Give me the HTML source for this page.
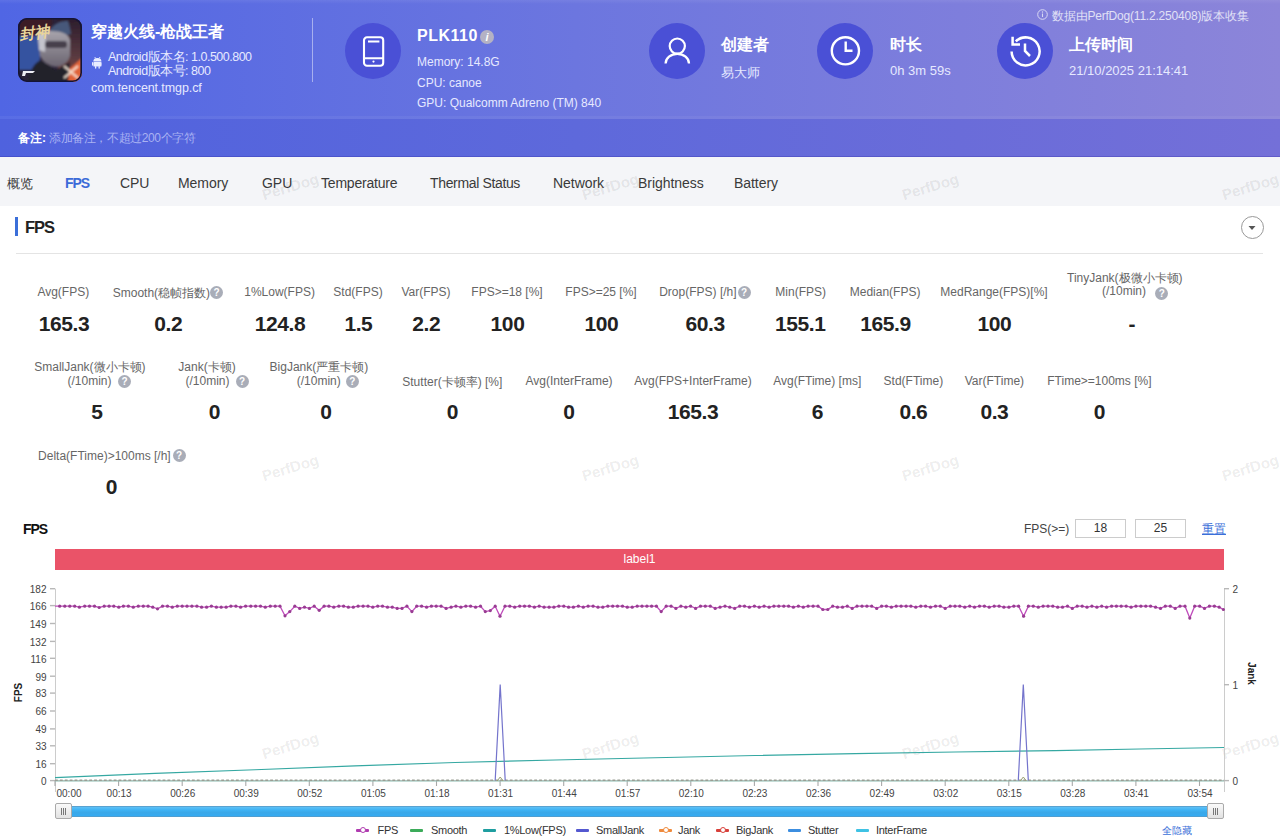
<!DOCTYPE html>
<html><head><meta charset="utf-8">
<style>
*{margin:0;padding:0;box-sizing:border-box}
html,body{width:1280px;height:839px;overflow:hidden;background:#fff;font-family:"Liberation Sans",sans-serif}
.abs{position:absolute;white-space:nowrap}
#hdr{position:absolute;left:0;top:0;width:1280px;height:119px;background:linear-gradient(180deg,rgba(255,255,255,0.07) 0,rgba(255,255,255,0) 4px),linear-gradient(90deg,#5066e4 0%,#6c76df 45%,#7e7edc 75%,#8c85d9 100%)}
#rmk{position:absolute;left:0;top:119px;width:1280px;height:38px;box-shadow:inset 0 -1px 0 rgba(40,30,150,0.25);background:linear-gradient(90deg,#4f62de 0%,#5e69db 45%,#6a6cd9 75%,#7470d8 100%)}
.circ{position:absolute;width:56px;height:56px;border-radius:50%;background:#4a50d6}
.wt{color:#fff}
.ttl{font-size:17px;font-weight:bold;color:#fff}
.sub{font-size:12px;color:#e6e9ff}
#tabs{position:absolute;left:0;top:157px;width:1280px;height:49px;background:#f4f5f8}
.tab{position:absolute;top:175px;font-size:14px;letter-spacing:-0.05px;color:#3a3a3a;white-space:nowrap}
.lbl{position:absolute;font-size:12px;color:#666;white-space:nowrap;text-align:center}
.val{position:absolute;font-size:21px;letter-spacing:-0.4px;font-weight:bold;color:#222;white-space:nowrap;text-align:center}
.q{display:inline-block;width:13px;height:13px;border-radius:50%;background:#a9a9a9;color:#fff;font-size:10px;font-weight:bold;line-height:13px;text-align:center;vertical-align:-2px;margin-left:2px}
.wm{position:absolute;font-size:15px;font-weight:bold;color:rgba(0,0,0,0.085);transform:rotate(-17deg);white-space:nowrap}
.ax{position:absolute;font-size:11px;color:#555;white-space:nowrap}
.leg{position:absolute;top:823.5px;font-size:11px;letter-spacing:-0.3px;color:#333;white-space:nowrap}
.li{position:absolute;top:828.5px;width:13px;height:3.5px;border-radius:1px}
</style><style>
.qi{position:absolute;width:13px;height:13px;border-radius:50%;background:#a9adb8;color:#fff;font:bold 10px/13px "Liberation Sans",sans-serif;text-align:center}
.inp{position:absolute;top:519px;width:51px;height:19px;border:1px solid #ccc;font-size:12px;color:#333;text-align:center;line-height:17px;background:#fff}
.tk{font-family:"Liberation Sans",sans-serif;font-size:10px;fill:#444}
.hdl{position:absolute;top:803px;width:17px;height:16px;background:linear-gradient(#fafafa,#e2e2e2);border:1px solid #aaa;border-radius:2px}
.hdl i{position:absolute;top:4px;width:1px;height:7px;background:#777}
.hdl i:nth-child(1){left:5px}.hdl i:nth-child(2){left:7px}.hdl i:nth-child(3){left:9px}
</style></head><body>
<div id="hdr"></div>
<div id="rmk"></div>
<div class="abs" style="left:0;top:116px;width:1280px;height:3px;background:rgba(255,255,255,0.05)"></div>

<!-- game icon -->
<svg class="abs" style="left:18px;top:18px" width="64" height="64" viewBox="0 0 64 64">
<defs><clipPath id="gc"><rect width="64" height="64" rx="9"/></clipPath>
<filter id="bl"><feGaussianBlur stdDeviation="1.3"/></filter>
<linearGradient id="bgr" x1="0" y1="0" x2="0" y2="1"><stop offset="0" stop-color="#2a1c2c"/><stop offset=".6" stop-color="#5a3a40"/><stop offset="1" stop-color="#8a4a3a"/></linearGradient>
<linearGradient id="sk" x1="0" y1="0" x2="0" y2="1"><stop offset="0" stop-color="#a8a4ac"/><stop offset="1" stop-color="#6a6470"/></linearGradient>
</defs>
<g clip-path="url(#gc)">
<rect width="64" height="64" fill="#2a2238"/>
<g filter="url(#bl)">
<rect x="40" y="0" width="24" height="64" fill="url(#bgr)"/>
<rect x="0" y="18" width="22" height="34" fill="#3552a0"/>
<rect x="0" y="0" width="34" height="18" fill="#3a1c28"/>
<path d="M36 64 L64 40 L64 64 Z" fill="#e06438"/>
<path d="M30 14 Q38 2 50 3 Q52 9 53 16 L44 18 L30 17 Z" fill="#46587a"/>
<path d="M20 18 Q22 12 32 13 Q50 13 52 22 L52 38 Q50 47 38 49 Q26 47 22 38 Z" fill="url(#sk)"/>
<path d="M20 17 Q23 13 28 14 L27 34 L21 32 Z" fill="#c4c4cc"/>
<rect x="27" y="23" width="22" height="7" rx="3" fill="#3a3440" opacity=".85"/>
<path d="M10 64 Q12 48 22 42 L38 52 L52 44 L50 64 Z" fill="#22222a"/>
<path d="M46 48 L60 60 M60 48 L46 60" stroke="#f8e8d8" stroke-width="2.2" opacity=".9"/>
</g>
<text x="1" y="20" font-size="15" font-weight="bold" font-style="italic" fill="#e8d49a" font-family="Liberation Serif,serif" transform="rotate(-8 16 12)">封神</text>
<path d="M5 53 h12 l-2 2 h-7 l-1 3 h-3z" fill="#eeeef4"/>
<rect x="0.8" y="0.8" width="62.4" height="62.4" rx="8.5" fill="none" stroke="#141436" stroke-width="1.6"/>
</g></svg>
<div class="abs ttl" style="left:91px;top:22px;font-size:16px">穿越火线-枪战王者</div>
<svg class="abs" style="left:91.5px;top:56.3px" width="10.8" height="12.8" viewBox="0 0 12 14"><path d="M3 1l1.2 1.6M9 1L7.8 2.6" stroke="#e8ecff" stroke-width="1"/><path d="M1.5 6a4.5 3.8 0 0 1 9 0z" fill="#e8ecff"/><rect x="1.5" y="6.6" width="9" height="5" rx="1" fill="#e8ecff"/><rect x="0" y="6.6" width="1.2" height="4" rx=".6" fill="#e8ecff"/><rect x="10.8" y="6.6" width="1.2" height="4" rx=".6" fill="#e8ecff"/><rect x="3.3" y="11" width="1.5" height="3" rx=".7" fill="#e8ecff"/><rect x="7.2" y="11" width="1.5" height="3" rx=".7" fill="#e8ecff"/></svg>
<div class="abs sub" style="left:108px;top:49.5px;font-size:12.5px;line-height:14px;letter-spacing:-0.5px">Android版本名: 1.0.500.800<br>Android版本号: 800</div>
<div class="abs sub" style="left:91px;top:81px;font-size:12.5px;letter-spacing:-0.1px">com.tencent.tmgp.cf</div>
<div class="abs" style="left:312px;top:18px;width:1px;height:64px;background:rgba(255,255,255,0.45)"></div>

<!-- device -->
<div class="circ" style="left:345px;top:23px"></div>
<svg class="abs" style="left:361px;top:35px" width="25" height="32" viewBox="0 0 25 32"><rect x="3" y="2.3" width="19.2" height="28.4" rx="3" fill="none" stroke="#fff" stroke-width="2.1"/><path d="M7 6.4h11.4M3 23.3h19.2" stroke="#fff" stroke-width="2"/><circle cx="12.5" cy="26.6" r="1.1" fill="#fff"/></svg>
<div class="abs ttl" style="left:417px;top:27px;font-size:16px;letter-spacing:0.5px">PLK110</div>
<div class="abs" style="left:480px;top:29.5px;width:14px;height:14px;border-radius:50%;background:#b4b2c4;color:#fff;font-size:11px;font-weight:bold;font-style:italic;text-align:center;line-height:14px">i</div>
<div class="abs sub" style="left:417px;top:55px">Memory: 14.8G</div>
<div class="abs sub" style="left:417px;top:76px">CPU: canoe</div>
<div class="abs sub" style="left:417px;top:96px">GPU: Qualcomm Adreno (TM) 840</div>

<!-- creator -->
<div class="circ" style="left:649px;top:23px"></div>
<svg class="abs" style="left:661px;top:35px" width="32" height="32" viewBox="0 0 32 32"><circle cx="16.3" cy="11.1" r="7.6" fill="none" stroke="#fff" stroke-width="2.2"/><path d="M4.6 28.6A11.7 9.8 0 0 1 28 28.6" fill="none" stroke="#fff" stroke-width="2.3"/></svg>
<div class="abs ttl" style="left:721px;top:35px;font-size:16px">创建者</div>
<div class="abs sub" style="left:721px;top:65px;font-size:12.5px">易大师</div>

<!-- duration -->
<div class="circ" style="left:817px;top:23px"></div>
<svg class="abs" style="left:829px;top:35px" width="32" height="32" viewBox="0 0 32 32"><circle cx="16.4" cy="15.8" r="13.6" fill="none" stroke="#fff" stroke-width="2.4"/><path d="M16.7 6.4v9.4h6.8" fill="none" stroke="#fff" stroke-width="2.4"/></svg>
<div class="abs ttl" style="left:890px;top:35px;font-size:16px">时长</div>
<div class="abs sub" style="left:890px;top:63px;font-size:13px">0h 3m 59s</div>

<!-- upload -->
<div class="circ" style="left:997px;top:23px"></div>
<svg class="abs" style="left:1009px;top:35px" width="32" height="32" viewBox="0 0 32 32"><path d="M2.6 16.5A14 14 0 1 0 6.8 6.4" fill="none" stroke="#fff" stroke-width="2.5"/><path d="M3.6 1.8v7.6h7.4" fill="none" stroke="#fff" stroke-width="2.5"/><path d="M16 8.6v7.4l5 5" fill="none" stroke="#fff" stroke-width="2.5"/></svg>
<div class="abs ttl" style="left:1069px;top:35px;font-size:16px">上传时间</div>
<div class="abs sub" style="left:1069px;top:63px;font-size:13px">21/10/2025 21:14:41</div>
<svg class="abs" style="left:1037px;top:9px" width="11" height="11" viewBox="0 0 11 11"><circle cx="5.5" cy="5.5" r="4.8" fill="none" stroke="#d8d8f4" stroke-width="1"/><path d="M5.5 4.5v3.5" stroke="#d8d8f4" stroke-width="1.1"/><circle cx="5.5" cy="3" r=".7" fill="#d8d8f4"/></svg>
<div class="abs" style="left:1052px;top:8px;font-size:12px;letter-spacing:-0.2px;color:#e0e0f6">数据由PerfDog(11.2.250408)版本收集</div>

<!-- remark -->
<div class="abs" style="left:18px;top:130px;font-size:12px;font-weight:bold;color:#fff">备注:</div>
<div class="abs" style="left:49px;top:130px;font-size:12px;letter-spacing:-0.4px;color:#a9b2f2">添加备注，不超过200个字符</div>

<!-- tabs -->
<div id="tabs"></div>
<div class="tab" style="left:7px;font-size:12.5px;top:176px">概览</div>
<div class="tab" style="left:65px;color:#3b6ad8;font-weight:bold;letter-spacing:-1.1px">FPS</div>
<div class="tab" style="left:120px">CPU</div>
<div class="tab" style="left:178px">Memory</div>
<div class="tab" style="left:262px">GPU</div>
<div class="tab" style="left:321px;letter-spacing:-0.2px">Temperature</div>
<div class="tab" style="left:430px;letter-spacing:-0.35px">Thermal Status</div>
<div class="tab" style="left:553px">Network</div>
<div class="tab" style="left:638px">Brightness</div>
<div class="tab" style="left:734px">Battery</div>

<!-- section title -->
<div class="abs" style="left:15px;top:217px;width:3px;height:19px;background:#3b6fd9"></div>
<div class="abs" style="left:25px;top:218px;font-size:16.5px;font-weight:bold;letter-spacing:-1px;color:#222">FPS</div>
<div class="abs" style="left:16px;top:253px;width:1247px;height:1px;background:#e4e4e4"></div>
<div class="abs" style="left:1241px;top:216px;width:23px;height:23px;border-radius:50%;border:1px solid #999"></div>
<svg class="abs" style="left:1248px;top:225px" width="8" height="6" viewBox="0 0 8 6"><path d="M0.5 1h7L4 5z" fill="#555"/></svg>

<div class="lbl" style="left:-46.7px;top:285px;width:220px">Avg(FPS)</div>
<div class="lbl" style="left:51.4px;top:285px;width:220px">Smooth(稳帧指数)</div>
<div class="qi" style="left:210.0px;top:286.4px">?</div>
<div class="lbl" style="left:169.6px;top:285px;width:220px">1%Low(FPS)</div>
<div class="lbl" style="left:248.0px;top:285px;width:220px">Std(FPS)</div>
<div class="lbl" style="left:316.0px;top:285px;width:220px">Var(FPS)</div>
<div class="lbl" style="left:397.0px;top:285px;width:220px">FPS&gt;=18 [%]</div>
<div class="lbl" style="left:491.0px;top:285px;width:220px">FPS&gt;=25 [%]</div>
<div class="lbl" style="left:587.9px;top:285px;width:220px">Drop(FPS) [/h]</div>
<div class="qi" style="left:737.5px;top:286.3px">?</div>
<div class="lbl" style="left:690.7px;top:285px;width:220px">Min(FPS)</div>
<div class="lbl" style="left:775.1px;top:285px;width:220px">Median(FPS)</div>
<div class="lbl" style="left:884.0px;top:285px;width:220px">MedRange(FPS)[%]</div>
<div class="val" style="left:-46.0px;top:312px;width:220px">165.3</div>
<div class="val" style="left:58.2px;top:312px;width:220px">0.2</div>
<div class="val" style="left:170.0px;top:312px;width:220px">124.8</div>
<div class="val" style="left:248.4px;top:312px;width:220px">1.5</div>
<div class="val" style="left:316.2px;top:312px;width:220px">2.2</div>
<div class="val" style="left:397.5px;top:312px;width:220px">100</div>
<div class="val" style="left:491.3px;top:312px;width:220px">100</div>
<div class="val" style="left:595.1px;top:312px;width:220px">60.3</div>
<div class="val" style="left:690.3px;top:312px;width:220px">155.1</div>
<div class="val" style="left:775.5px;top:312px;width:220px">165.9</div>
<div class="val" style="left:884.4px;top:312px;width:220px">100</div>
<div class="lbl" style="left:1014.8px;top:270px;width:220px">TinyJank(极微小卡顿)</div>
<div class="lbl" style="left:1014.0px;top:284px;width:220px">(/10min)</div>
<div class="qi" style="left:1155.3px;top:286.5px">?</div>
<div class="val" style="left:1021.8px;top:312px;width:220px">-</div>
<div class="lbl" style="left:-20.1px;top:359px;width:220px">SmallJank(微小卡顿)</div>
<div class="lbl" style="left:-20.5px;top:373.5px;width:220px">(/10min)</div>
<div class="qi" style="left:118.0px;top:374.5px">?</div>
<div class="val" style="left:-13.0px;top:400px;width:220px">5</div>
<div class="lbl" style="left:97.0px;top:359px;width:220px">Jank(卡顿)</div>
<div class="lbl" style="left:97.5px;top:373.5px;width:220px">(/10min)</div>
<div class="qi" style="left:235.6px;top:374.5px">?</div>
<div class="val" style="left:104.5px;top:400px;width:220px">0</div>
<div class="lbl" style="left:208.9px;top:359px;width:220px">BigJank(严重卡顿)</div>
<div class="lbl" style="left:208.8px;top:373.5px;width:220px">(/10min)</div>
<div class="qi" style="left:345.8px;top:374.5px">?</div>
<div class="val" style="left:216.0px;top:400px;width:220px">0</div>
<div class="lbl" style="left:342.3px;top:373.5px;width:220px">Stutter(卡顿率) [%]</div>
<div class="val" style="left:342.3px;top:400px;width:220px">0</div>
<div class="lbl" style="left:459.0px;top:373.5px;width:220px">Avg(InterFrame)</div>
<div class="val" style="left:459.0px;top:400px;width:220px">0</div>
<div class="lbl" style="left:583.0px;top:373.5px;width:220px">Avg(FPS+InterFrame)</div>
<div class="val" style="left:583.0px;top:400px;width:220px">165.3</div>
<div class="lbl" style="left:707.3px;top:373.5px;width:220px">Avg(FTime) [ms]</div>
<div class="val" style="left:707.3px;top:400px;width:220px">6</div>
<div class="lbl" style="left:803.4px;top:373.5px;width:220px">Std(FTime)</div>
<div class="val" style="left:803.4px;top:400px;width:220px">0.6</div>
<div class="lbl" style="left:884.4px;top:373.5px;width:220px">Var(FTime)</div>
<div class="val" style="left:884.4px;top:400px;width:220px">0.3</div>
<div class="lbl" style="left:989.4px;top:373.5px;width:220px">FTime&gt;=100ms [%]</div>
<div class="val" style="left:989.4px;top:400px;width:220px">0</div>
<div class="lbl" style="left:-5.6px;top:448.5px;width:220px">Delta(FTime)&gt;100ms [/h]</div>
<div class="qi" style="left:172.5px;top:449.0px">?</div>
<div class="val" style="left:1.5px;top:475px;width:220px">0</div>
<div class="wm" style="left:261px;top:178px">PerfDog</div>
<div class="wm" style="left:581px;top:178px">PerfDog</div>
<div class="wm" style="left:901px;top:178px">PerfDog</div>
<div class="wm" style="left:1221px;top:178px">PerfDog</div>
<div class="wm" style="left:261px;top:459px">PerfDog</div>
<div class="wm" style="left:581px;top:459px">PerfDog</div>
<div class="wm" style="left:901px;top:459px">PerfDog</div>
<div class="wm" style="left:1221px;top:459px">PerfDog</div>
<div class="wm" style="left:261px;top:737px">PerfDog</div>
<div class="wm" style="left:581px;top:737px">PerfDog</div>
<div class="wm" style="left:901px;top:737px">PerfDog</div>
<div class="wm" style="left:1221px;top:737px">PerfDog</div>
<div class="abs" style="left:23px;top:521px;font-size:14px;font-weight:bold;letter-spacing:-1.1px;color:#111">FPS</div>
<div class="abs" style="left:1024px;top:522px;font-size:12px;color:#444">FPS(&gt;=)</div>
<div class="inp" style="left:1075px">18</div>
<div class="inp" style="left:1135px">25</div>
<div class="abs" style="left:1202px;top:521px;font-size:12px;color:#3b6fd9;text-decoration:underline">重置</div>
<div class="abs" style="left:55px;top:549px;width:1169px;height:21px;background:#ea5368;color:#fff;font-size:12px;text-align:center;line-height:21px">label1</div>
<svg class="abs" style="left:0;top:0" width="1280" height="839"><line x1="55.5" y1="588.7" x2="55.5" y2="792" stroke="#ccc" stroke-width="1"/><line x1="1224.5" y1="588.7" x2="1224.5" y2="792" stroke="#ccc" stroke-width="1"/><line x1="55" y1="780.5" x2="1224" y2="780.5" stroke="#ccc" stroke-width="1"/><line x1="50" y1="780.6" x2="55" y2="780.6" stroke="#b8b8b8" stroke-width="1.4"/><text x="46.5" y="784.9" text-anchor="end" class="tk">0</text><line x1="50" y1="763.7" x2="55" y2="763.7" stroke="#b8b8b8" stroke-width="1.4"/><text x="46.5" y="768.0" text-anchor="end" class="tk">16</text><line x1="50" y1="745.8" x2="55" y2="745.8" stroke="#b8b8b8" stroke-width="1.4"/><text x="46.5" y="750.1" text-anchor="end" class="tk">33</text><line x1="50" y1="728.9" x2="55" y2="728.9" stroke="#b8b8b8" stroke-width="1.4"/><text x="46.5" y="733.2" text-anchor="end" class="tk">49</text><line x1="50" y1="711.0" x2="55" y2="711.0" stroke="#b8b8b8" stroke-width="1.4"/><text x="46.5" y="715.3" text-anchor="end" class="tk">66</text><line x1="50" y1="693.1" x2="55" y2="693.1" stroke="#b8b8b8" stroke-width="1.4"/><text x="46.5" y="697.4" text-anchor="end" class="tk">83</text><line x1="50" y1="676.2" x2="55" y2="676.2" stroke="#b8b8b8" stroke-width="1.4"/><text x="46.5" y="680.5" text-anchor="end" class="tk">99</text><line x1="50" y1="658.3" x2="55" y2="658.3" stroke="#b8b8b8" stroke-width="1.4"/><text x="46.5" y="662.6" text-anchor="end" class="tk">116</text><line x1="50" y1="641.4" x2="55" y2="641.4" stroke="#b8b8b8" stroke-width="1.4"/><text x="46.5" y="645.7" text-anchor="end" class="tk">132</text><line x1="50" y1="623.5" x2="55" y2="623.5" stroke="#b8b8b8" stroke-width="1.4"/><text x="46.5" y="627.8" text-anchor="end" class="tk">149</text><line x1="50" y1="605.6" x2="55" y2="605.6" stroke="#b8b8b8" stroke-width="1.4"/><text x="46.5" y="609.9" text-anchor="end" class="tk">166</text><line x1="50" y1="588.7" x2="55" y2="588.7" stroke="#b8b8b8" stroke-width="1.4"/><text x="46.5" y="593.0" text-anchor="end" class="tk">182</text><line x1="1224" y1="780.6" x2="1229" y2="780.6" stroke="#b8b8b8" stroke-width="1.4"/><text x="1232.5" y="784.9" class="tk">0</text><line x1="1224" y1="684.7" x2="1229" y2="684.7" stroke="#b8b8b8" stroke-width="1.4"/><text x="1232.5" y="689.0" class="tk">1</text><line x1="1224" y1="588.7" x2="1229" y2="588.7" stroke="#b8b8b8" stroke-width="1.4"/><text x="1232.5" y="593.0" class="tk">2</text><line x1="55.0" y1="780.6" x2="55.0" y2="786" stroke="#a8a8a8" stroke-width="1.1"/><text x="69.0" y="797.4" text-anchor="middle" class="tk">00:00</text><line x1="118.6" y1="780.6" x2="118.6" y2="786" stroke="#a8a8a8" stroke-width="1.1"/><text x="119.1" y="797.4" text-anchor="middle" class="tk">00:13</text><line x1="182.2" y1="780.6" x2="182.2" y2="786" stroke="#a8a8a8" stroke-width="1.1"/><text x="182.7" y="797.4" text-anchor="middle" class="tk">00:26</text><line x1="245.8" y1="780.6" x2="245.8" y2="786" stroke="#a8a8a8" stroke-width="1.1"/><text x="246.2" y="797.4" text-anchor="middle" class="tk">00:39</text><line x1="309.3" y1="780.6" x2="309.3" y2="786" stroke="#a8a8a8" stroke-width="1.1"/><text x="309.8" y="797.4" text-anchor="middle" class="tk">00:52</text><line x1="372.9" y1="780.6" x2="372.9" y2="786" stroke="#a8a8a8" stroke-width="1.1"/><text x="373.4" y="797.4" text-anchor="middle" class="tk">01:05</text><line x1="436.5" y1="780.6" x2="436.5" y2="786" stroke="#a8a8a8" stroke-width="1.1"/><text x="437.0" y="797.4" text-anchor="middle" class="tk">01:18</text><line x1="500.1" y1="780.6" x2="500.1" y2="786" stroke="#a8a8a8" stroke-width="1.1"/><text x="500.6" y="797.4" text-anchor="middle" class="tk">01:31</text><line x1="563.7" y1="780.6" x2="563.7" y2="786" stroke="#a8a8a8" stroke-width="1.1"/><text x="564.2" y="797.4" text-anchor="middle" class="tk">01:44</text><line x1="627.2" y1="780.6" x2="627.2" y2="786" stroke="#a8a8a8" stroke-width="1.1"/><text x="627.8" y="797.4" text-anchor="middle" class="tk">01:57</text><line x1="690.8" y1="780.6" x2="690.8" y2="786" stroke="#a8a8a8" stroke-width="1.1"/><text x="691.3" y="797.4" text-anchor="middle" class="tk">02:10</text><line x1="754.4" y1="780.6" x2="754.4" y2="786" stroke="#a8a8a8" stroke-width="1.1"/><text x="754.9" y="797.4" text-anchor="middle" class="tk">02:23</text><line x1="818.0" y1="780.6" x2="818.0" y2="786" stroke="#a8a8a8" stroke-width="1.1"/><text x="818.5" y="797.4" text-anchor="middle" class="tk">02:36</text><line x1="881.6" y1="780.6" x2="881.6" y2="786" stroke="#a8a8a8" stroke-width="1.1"/><text x="882.1" y="797.4" text-anchor="middle" class="tk">02:49</text><line x1="945.2" y1="780.6" x2="945.2" y2="786" stroke="#a8a8a8" stroke-width="1.1"/><text x="945.7" y="797.4" text-anchor="middle" class="tk">03:02</text><line x1="1008.8" y1="780.6" x2="1008.8" y2="786" stroke="#a8a8a8" stroke-width="1.1"/><text x="1009.2" y="797.4" text-anchor="middle" class="tk">03:15</text><line x1="1072.3" y1="780.6" x2="1072.3" y2="786" stroke="#a8a8a8" stroke-width="1.1"/><text x="1072.8" y="797.4" text-anchor="middle" class="tk">03:28</text><line x1="1135.9" y1="780.6" x2="1135.9" y2="786" stroke="#a8a8a8" stroke-width="1.1"/><text x="1136.4" y="797.4" text-anchor="middle" class="tk">03:41</text><line x1="1199.5" y1="780.6" x2="1199.5" y2="786" stroke="#a8a8a8" stroke-width="1.1"/><text x="1200.0" y="797.4" text-anchor="middle" class="tk">03:54</text><text transform="translate(21.5,692.5) rotate(-90)" text-anchor="middle" style="font:bold 10px 'Liberation Sans',sans-serif;fill:#222">FPS</text><text transform="translate(1247.5,673.5) rotate(90)" text-anchor="middle" style="font:bold 10px 'Liberation Sans',sans-serif;fill:#222">Jank</text><polyline fill="none" stroke="#35a8a2" stroke-width="1.1" points="55,777.6 155,773.4 255,769.7 355,765.9 455,762.5 555,760 655,757.8 755,755.5 855,753.6 955,752 1055,750.6 1140,749 1224,747.5"/><line x1="55" y1="781" x2="1224" y2="781" stroke="#8cbcb0" stroke-width="1"/><line x1="55" y1="780.2" x2="1224" y2="780.2" stroke="#9a9e94" stroke-width="1.5" stroke-dasharray="2.8 2.09"/><polyline fill="none" stroke="#7474cc" stroke-width="1.2" points="495.2,780.4 500.2,684.6 505.2,780.4"/><path d="M497.2,781 L500.2,777 L503.2,781" fill="none" stroke="#9aa070" stroke-width="1"/><polyline fill="none" stroke="#7474cc" stroke-width="1.2" points="1018.3,780.4 1023.3,684.6 1028.3,780.4"/><path d="M1020.3,781 L1023.3,777 L1026.3,781" fill="none" stroke="#9aa070" stroke-width="1"/><polyline fill="none" stroke="#c04cbc" stroke-width="1.3" points="55.0,606.2 59.7,606.2 64.8,606.2 69.8,606.2 74.7,606.2 79.4,607.2 84.7,606.2 89.5,606.2 94.5,606.2 99.2,607.5 104.2,606.2 109.1,606.2 113.8,606.2 118.8,607.2 123.4,606.2 128.4,606.2 133.3,607.2 138.3,606.2 143.3,606.2 148.1,606.2 152.8,607.2 157.5,608.8 162.5,606.2 167.5,606.2 172.3,607.2 177.3,606.2 182.2,606.2 187.0,606.2 191.9,606.2 196.9,606.2 201.6,607.2 206.6,607.2 211.4,606.2 216.4,607.2 221.2,607.2 226.1,607.2 230.9,606.2 235.9,606.2 240.6,607.2 245.6,606.2 250.8,606.2 255.6,606.2 260.5,606.2 265.3,607.2 270.3,606.2 275.2,606.2 280.0,606.2 285.0,615.8 289.8,611.6 294.8,606.2 299.7,608.4 304.5,607.2 309.4,608.4 314.2,606.2 319.2,610.3 324.1,606.2 328.9,606.2 333.8,607.2 338.8,606.2 343.6,606.2 348.4,607.2 353.3,607.2 358.1,606.2 363.1,606.2 368.0,606.2 372.8,607.2 377.7,606.2 382.5,606.2 387.5,607.2 392.3,607.2 397.2,608.4 402.0,608.4 406.9,606.2 411.9,611.6 416.7,606.2 421.6,606.2 426.6,607.2 431.4,606.2 436.2,606.2 441.1,606.2 446.1,608.4 451.1,607.2 455.9,606.2 460.9,607.2 465.8,606.2 470.6,606.2 475.6,607.2 480.5,606.2 485.3,611.6 490.3,610.6 495.2,606.2 500.0,616.2 505.0,606.2 509.8,606.2 514.7,607.2 519.7,606.2 524.5,606.2 529.4,606.2 534.4,607.2 539.2,606.2 544.1,607.2 549.1,607.2 553.9,607.2 558.8,606.2 563.8,606.2 568.6,607.2 573.4,607.2 578.4,606.2 583.3,607.2 588.1,606.2 593.1,606.2 598.0,607.2 602.8,607.2 607.8,606.2 612.7,606.2 617.5,606.2 622.5,606.2 627.3,607.2 632.2,607.2 637.2,606.2 642.0,606.2 646.9,606.2 651.6,606.2 656.4,606.2 661.2,611.6 666.2,606.2 671.1,606.2 675.9,608.4 680.9,606.2 685.8,607.2 690.6,606.2 695.6,608.4 700.5,606.2 705.3,606.2 710.3,606.2 715.2,608.4 720.0,607.2 725.0,606.2 729.8,607.2 734.7,608.4 739.7,606.2 744.5,606.2 749.4,607.2 754.4,606.2 759.2,607.2 764.1,606.2 769.1,607.2 773.9,606.2 778.8,606.2 783.8,606.2 788.6,606.2 793.4,607.2 798.4,606.2 803.3,607.2 808.1,606.2 813.1,606.2 818.0,606.2 822.8,609.5 827.8,609.5 832.7,606.2 837.5,607.2 842.5,607.2 847.3,606.2 852.2,608.4 857.0,606.2 862.0,606.2 866.9,606.2 871.7,606.2 876.7,608.4 881.6,606.2 886.4,606.2 891.4,607.2 896.2,606.2 901.1,606.2 906.1,606.2 910.9,606.2 915.8,607.2 920.8,606.2 925.6,606.2 930.5,607.2 935.5,606.2 940.3,606.2 945.2,608.4 950.2,606.2 955.0,606.2 959.8,606.2 964.8,607.2 969.7,606.2 974.5,607.2 979.5,606.2 984.4,606.2 989.2,607.2 994.2,606.2 999.1,606.2 1003.9,607.2 1008.9,607.2 1013.8,606.2 1018.6,606.2 1023.6,616.2 1028.4,606.2 1033.3,606.2 1038.3,607.2 1043.1,606.2 1048.0,606.2 1052.8,606.2 1057.7,607.2 1062.5,607.2 1067.5,606.2 1072.3,608.4 1077.2,606.2 1082.2,606.2 1087.0,607.2 1091.9,606.2 1096.9,607.2 1101.7,606.2 1106.6,607.2 1111.6,606.2 1116.4,606.2 1121.2,606.2 1126.2,606.2 1131.1,607.2 1135.9,606.2 1140.9,606.2 1145.8,606.2 1150.6,606.2 1155.6,607.2 1160.5,608.4 1165.3,606.2 1170.3,606.2 1175.2,608.4 1180.0,606.2 1185.0,606.2 1189.8,618.1 1194.7,606.2 1199.7,606.2 1204.5,608.4 1209.4,606.2 1214.4,606.2 1219.2,607.2 1223.4,609.5"/><circle cx="59.7" cy="606.2" r="1.6" fill="#983c92"/><circle cx="64.8" cy="606.2" r="1.6" fill="#983c92"/><circle cx="69.8" cy="606.2" r="1.6" fill="#983c92"/><circle cx="74.7" cy="606.2" r="1.6" fill="#983c92"/><circle cx="79.4" cy="607.2" r="1.6" fill="#983c92"/><circle cx="84.7" cy="606.2" r="1.6" fill="#983c92"/><circle cx="89.5" cy="606.2" r="1.6" fill="#983c92"/><circle cx="94.5" cy="606.2" r="1.6" fill="#983c92"/><circle cx="99.2" cy="607.5" r="1.6" fill="#983c92"/><circle cx="104.2" cy="606.2" r="1.6" fill="#983c92"/><circle cx="109.1" cy="606.2" r="1.6" fill="#983c92"/><circle cx="113.8" cy="606.2" r="1.6" fill="#983c92"/><circle cx="118.8" cy="607.2" r="1.6" fill="#983c92"/><circle cx="123.4" cy="606.2" r="1.6" fill="#983c92"/><circle cx="128.4" cy="606.2" r="1.6" fill="#983c92"/><circle cx="133.3" cy="607.2" r="1.6" fill="#983c92"/><circle cx="138.3" cy="606.2" r="1.6" fill="#983c92"/><circle cx="143.3" cy="606.2" r="1.6" fill="#983c92"/><circle cx="148.1" cy="606.2" r="1.6" fill="#983c92"/><circle cx="152.8" cy="607.2" r="1.6" fill="#983c92"/><circle cx="157.5" cy="608.8" r="1.6" fill="#983c92"/><circle cx="162.5" cy="606.2" r="1.6" fill="#983c92"/><circle cx="167.5" cy="606.2" r="1.6" fill="#983c92"/><circle cx="172.3" cy="607.2" r="1.6" fill="#983c92"/><circle cx="177.3" cy="606.2" r="1.6" fill="#983c92"/><circle cx="182.2" cy="606.2" r="1.6" fill="#983c92"/><circle cx="187.0" cy="606.2" r="1.6" fill="#983c92"/><circle cx="191.9" cy="606.2" r="1.6" fill="#983c92"/><circle cx="196.9" cy="606.2" r="1.6" fill="#983c92"/><circle cx="201.6" cy="607.2" r="1.6" fill="#983c92"/><circle cx="206.6" cy="607.2" r="1.6" fill="#983c92"/><circle cx="211.4" cy="606.2" r="1.6" fill="#983c92"/><circle cx="216.4" cy="607.2" r="1.6" fill="#983c92"/><circle cx="221.2" cy="607.2" r="1.6" fill="#983c92"/><circle cx="226.1" cy="607.2" r="1.6" fill="#983c92"/><circle cx="230.9" cy="606.2" r="1.6" fill="#983c92"/><circle cx="235.9" cy="606.2" r="1.6" fill="#983c92"/><circle cx="240.6" cy="607.2" r="1.6" fill="#983c92"/><circle cx="245.6" cy="606.2" r="1.6" fill="#983c92"/><circle cx="250.8" cy="606.2" r="1.6" fill="#983c92"/><circle cx="255.6" cy="606.2" r="1.6" fill="#983c92"/><circle cx="260.5" cy="606.2" r="1.6" fill="#983c92"/><circle cx="265.3" cy="607.2" r="1.6" fill="#983c92"/><circle cx="270.3" cy="606.2" r="1.6" fill="#983c92"/><circle cx="275.2" cy="606.2" r="1.6" fill="#983c92"/><circle cx="280.0" cy="606.2" r="1.6" fill="#983c92"/><circle cx="285.0" cy="615.8" r="1.6" fill="#983c92"/><circle cx="289.8" cy="611.6" r="1.6" fill="#983c92"/><circle cx="294.8" cy="606.2" r="1.6" fill="#983c92"/><circle cx="299.7" cy="608.4" r="1.6" fill="#983c92"/><circle cx="304.5" cy="607.2" r="1.6" fill="#983c92"/><circle cx="309.4" cy="608.4" r="1.6" fill="#983c92"/><circle cx="314.2" cy="606.2" r="1.6" fill="#983c92"/><circle cx="319.2" cy="610.3" r="1.6" fill="#983c92"/><circle cx="324.1" cy="606.2" r="1.6" fill="#983c92"/><circle cx="328.9" cy="606.2" r="1.6" fill="#983c92"/><circle cx="333.8" cy="607.2" r="1.6" fill="#983c92"/><circle cx="338.8" cy="606.2" r="1.6" fill="#983c92"/><circle cx="343.6" cy="606.2" r="1.6" fill="#983c92"/><circle cx="348.4" cy="607.2" r="1.6" fill="#983c92"/><circle cx="353.3" cy="607.2" r="1.6" fill="#983c92"/><circle cx="358.1" cy="606.2" r="1.6" fill="#983c92"/><circle cx="363.1" cy="606.2" r="1.6" fill="#983c92"/><circle cx="368.0" cy="606.2" r="1.6" fill="#983c92"/><circle cx="372.8" cy="607.2" r="1.6" fill="#983c92"/><circle cx="377.7" cy="606.2" r="1.6" fill="#983c92"/><circle cx="382.5" cy="606.2" r="1.6" fill="#983c92"/><circle cx="387.5" cy="607.2" r="1.6" fill="#983c92"/><circle cx="392.3" cy="607.2" r="1.6" fill="#983c92"/><circle cx="397.2" cy="608.4" r="1.6" fill="#983c92"/><circle cx="402.0" cy="608.4" r="1.6" fill="#983c92"/><circle cx="406.9" cy="606.2" r="1.6" fill="#983c92"/><circle cx="411.9" cy="611.6" r="1.6" fill="#983c92"/><circle cx="416.7" cy="606.2" r="1.6" fill="#983c92"/><circle cx="421.6" cy="606.2" r="1.6" fill="#983c92"/><circle cx="426.6" cy="607.2" r="1.6" fill="#983c92"/><circle cx="431.4" cy="606.2" r="1.6" fill="#983c92"/><circle cx="436.2" cy="606.2" r="1.6" fill="#983c92"/><circle cx="441.1" cy="606.2" r="1.6" fill="#983c92"/><circle cx="446.1" cy="608.4" r="1.6" fill="#983c92"/><circle cx="451.1" cy="607.2" r="1.6" fill="#983c92"/><circle cx="455.9" cy="606.2" r="1.6" fill="#983c92"/><circle cx="460.9" cy="607.2" r="1.6" fill="#983c92"/><circle cx="465.8" cy="606.2" r="1.6" fill="#983c92"/><circle cx="470.6" cy="606.2" r="1.6" fill="#983c92"/><circle cx="475.6" cy="607.2" r="1.6" fill="#983c92"/><circle cx="480.5" cy="606.2" r="1.6" fill="#983c92"/><circle cx="485.3" cy="611.6" r="1.6" fill="#983c92"/><circle cx="490.3" cy="610.6" r="1.6" fill="#983c92"/><circle cx="495.2" cy="606.2" r="1.6" fill="#983c92"/><circle cx="500.0" cy="616.2" r="1.6" fill="#983c92"/><circle cx="505.0" cy="606.2" r="1.6" fill="#983c92"/><circle cx="509.8" cy="606.2" r="1.6" fill="#983c92"/><circle cx="514.7" cy="607.2" r="1.6" fill="#983c92"/><circle cx="519.7" cy="606.2" r="1.6" fill="#983c92"/><circle cx="524.5" cy="606.2" r="1.6" fill="#983c92"/><circle cx="529.4" cy="606.2" r="1.6" fill="#983c92"/><circle cx="534.4" cy="607.2" r="1.6" fill="#983c92"/><circle cx="539.2" cy="606.2" r="1.6" fill="#983c92"/><circle cx="544.1" cy="607.2" r="1.6" fill="#983c92"/><circle cx="549.1" cy="607.2" r="1.6" fill="#983c92"/><circle cx="553.9" cy="607.2" r="1.6" fill="#983c92"/><circle cx="558.8" cy="606.2" r="1.6" fill="#983c92"/><circle cx="563.8" cy="606.2" r="1.6" fill="#983c92"/><circle cx="568.6" cy="607.2" r="1.6" fill="#983c92"/><circle cx="573.4" cy="607.2" r="1.6" fill="#983c92"/><circle cx="578.4" cy="606.2" r="1.6" fill="#983c92"/><circle cx="583.3" cy="607.2" r="1.6" fill="#983c92"/><circle cx="588.1" cy="606.2" r="1.6" fill="#983c92"/><circle cx="593.1" cy="606.2" r="1.6" fill="#983c92"/><circle cx="598.0" cy="607.2" r="1.6" fill="#983c92"/><circle cx="602.8" cy="607.2" r="1.6" fill="#983c92"/><circle cx="607.8" cy="606.2" r="1.6" fill="#983c92"/><circle cx="612.7" cy="606.2" r="1.6" fill="#983c92"/><circle cx="617.5" cy="606.2" r="1.6" fill="#983c92"/><circle cx="622.5" cy="606.2" r="1.6" fill="#983c92"/><circle cx="627.3" cy="607.2" r="1.6" fill="#983c92"/><circle cx="632.2" cy="607.2" r="1.6" fill="#983c92"/><circle cx="637.2" cy="606.2" r="1.6" fill="#983c92"/><circle cx="642.0" cy="606.2" r="1.6" fill="#983c92"/><circle cx="646.9" cy="606.2" r="1.6" fill="#983c92"/><circle cx="651.6" cy="606.2" r="1.6" fill="#983c92"/><circle cx="656.4" cy="606.2" r="1.6" fill="#983c92"/><circle cx="661.2" cy="611.6" r="1.6" fill="#983c92"/><circle cx="666.2" cy="606.2" r="1.6" fill="#983c92"/><circle cx="671.1" cy="606.2" r="1.6" fill="#983c92"/><circle cx="675.9" cy="608.4" r="1.6" fill="#983c92"/><circle cx="680.9" cy="606.2" r="1.6" fill="#983c92"/><circle cx="685.8" cy="607.2" r="1.6" fill="#983c92"/><circle cx="690.6" cy="606.2" r="1.6" fill="#983c92"/><circle cx="695.6" cy="608.4" r="1.6" fill="#983c92"/><circle cx="700.5" cy="606.2" r="1.6" fill="#983c92"/><circle cx="705.3" cy="606.2" r="1.6" fill="#983c92"/><circle cx="710.3" cy="606.2" r="1.6" fill="#983c92"/><circle cx="715.2" cy="608.4" r="1.6" fill="#983c92"/><circle cx="720.0" cy="607.2" r="1.6" fill="#983c92"/><circle cx="725.0" cy="606.2" r="1.6" fill="#983c92"/><circle cx="729.8" cy="607.2" r="1.6" fill="#983c92"/><circle cx="734.7" cy="608.4" r="1.6" fill="#983c92"/><circle cx="739.7" cy="606.2" r="1.6" fill="#983c92"/><circle cx="744.5" cy="606.2" r="1.6" fill="#983c92"/><circle cx="749.4" cy="607.2" r="1.6" fill="#983c92"/><circle cx="754.4" cy="606.2" r="1.6" fill="#983c92"/><circle cx="759.2" cy="607.2" r="1.6" fill="#983c92"/><circle cx="764.1" cy="606.2" r="1.6" fill="#983c92"/><circle cx="769.1" cy="607.2" r="1.6" fill="#983c92"/><circle cx="773.9" cy="606.2" r="1.6" fill="#983c92"/><circle cx="778.8" cy="606.2" r="1.6" fill="#983c92"/><circle cx="783.8" cy="606.2" r="1.6" fill="#983c92"/><circle cx="788.6" cy="606.2" r="1.6" fill="#983c92"/><circle cx="793.4" cy="607.2" r="1.6" fill="#983c92"/><circle cx="798.4" cy="606.2" r="1.6" fill="#983c92"/><circle cx="803.3" cy="607.2" r="1.6" fill="#983c92"/><circle cx="808.1" cy="606.2" r="1.6" fill="#983c92"/><circle cx="813.1" cy="606.2" r="1.6" fill="#983c92"/><circle cx="818.0" cy="606.2" r="1.6" fill="#983c92"/><circle cx="822.8" cy="609.5" r="1.6" fill="#983c92"/><circle cx="827.8" cy="609.5" r="1.6" fill="#983c92"/><circle cx="832.7" cy="606.2" r="1.6" fill="#983c92"/><circle cx="837.5" cy="607.2" r="1.6" fill="#983c92"/><circle cx="842.5" cy="607.2" r="1.6" fill="#983c92"/><circle cx="847.3" cy="606.2" r="1.6" fill="#983c92"/><circle cx="852.2" cy="608.4" r="1.6" fill="#983c92"/><circle cx="857.0" cy="606.2" r="1.6" fill="#983c92"/><circle cx="862.0" cy="606.2" r="1.6" fill="#983c92"/><circle cx="866.9" cy="606.2" r="1.6" fill="#983c92"/><circle cx="871.7" cy="606.2" r="1.6" fill="#983c92"/><circle cx="876.7" cy="608.4" r="1.6" fill="#983c92"/><circle cx="881.6" cy="606.2" r="1.6" fill="#983c92"/><circle cx="886.4" cy="606.2" r="1.6" fill="#983c92"/><circle cx="891.4" cy="607.2" r="1.6" fill="#983c92"/><circle cx="896.2" cy="606.2" r="1.6" fill="#983c92"/><circle cx="901.1" cy="606.2" r="1.6" fill="#983c92"/><circle cx="906.1" cy="606.2" r="1.6" fill="#983c92"/><circle cx="910.9" cy="606.2" r="1.6" fill="#983c92"/><circle cx="915.8" cy="607.2" r="1.6" fill="#983c92"/><circle cx="920.8" cy="606.2" r="1.6" fill="#983c92"/><circle cx="925.6" cy="606.2" r="1.6" fill="#983c92"/><circle cx="930.5" cy="607.2" r="1.6" fill="#983c92"/><circle cx="935.5" cy="606.2" r="1.6" fill="#983c92"/><circle cx="940.3" cy="606.2" r="1.6" fill="#983c92"/><circle cx="945.2" cy="608.4" r="1.6" fill="#983c92"/><circle cx="950.2" cy="606.2" r="1.6" fill="#983c92"/><circle cx="955.0" cy="606.2" r="1.6" fill="#983c92"/><circle cx="959.8" cy="606.2" r="1.6" fill="#983c92"/><circle cx="964.8" cy="607.2" r="1.6" fill="#983c92"/><circle cx="969.7" cy="606.2" r="1.6" fill="#983c92"/><circle cx="974.5" cy="607.2" r="1.6" fill="#983c92"/><circle cx="979.5" cy="606.2" r="1.6" fill="#983c92"/><circle cx="984.4" cy="606.2" r="1.6" fill="#983c92"/><circle cx="989.2" cy="607.2" r="1.6" fill="#983c92"/><circle cx="994.2" cy="606.2" r="1.6" fill="#983c92"/><circle cx="999.1" cy="606.2" r="1.6" fill="#983c92"/><circle cx="1003.9" cy="607.2" r="1.6" fill="#983c92"/><circle cx="1008.9" cy="607.2" r="1.6" fill="#983c92"/><circle cx="1013.8" cy="606.2" r="1.6" fill="#983c92"/><circle cx="1018.6" cy="606.2" r="1.6" fill="#983c92"/><circle cx="1023.6" cy="616.2" r="1.6" fill="#983c92"/><circle cx="1028.4" cy="606.2" r="1.6" fill="#983c92"/><circle cx="1033.3" cy="606.2" r="1.6" fill="#983c92"/><circle cx="1038.3" cy="607.2" r="1.6" fill="#983c92"/><circle cx="1043.1" cy="606.2" r="1.6" fill="#983c92"/><circle cx="1048.0" cy="606.2" r="1.6" fill="#983c92"/><circle cx="1052.8" cy="606.2" r="1.6" fill="#983c92"/><circle cx="1057.7" cy="607.2" r="1.6" fill="#983c92"/><circle cx="1062.5" cy="607.2" r="1.6" fill="#983c92"/><circle cx="1067.5" cy="606.2" r="1.6" fill="#983c92"/><circle cx="1072.3" cy="608.4" r="1.6" fill="#983c92"/><circle cx="1077.2" cy="606.2" r="1.6" fill="#983c92"/><circle cx="1082.2" cy="606.2" r="1.6" fill="#983c92"/><circle cx="1087.0" cy="607.2" r="1.6" fill="#983c92"/><circle cx="1091.9" cy="606.2" r="1.6" fill="#983c92"/><circle cx="1096.9" cy="607.2" r="1.6" fill="#983c92"/><circle cx="1101.7" cy="606.2" r="1.6" fill="#983c92"/><circle cx="1106.6" cy="607.2" r="1.6" fill="#983c92"/><circle cx="1111.6" cy="606.2" r="1.6" fill="#983c92"/><circle cx="1116.4" cy="606.2" r="1.6" fill="#983c92"/><circle cx="1121.2" cy="606.2" r="1.6" fill="#983c92"/><circle cx="1126.2" cy="606.2" r="1.6" fill="#983c92"/><circle cx="1131.1" cy="607.2" r="1.6" fill="#983c92"/><circle cx="1135.9" cy="606.2" r="1.6" fill="#983c92"/><circle cx="1140.9" cy="606.2" r="1.6" fill="#983c92"/><circle cx="1145.8" cy="606.2" r="1.6" fill="#983c92"/><circle cx="1150.6" cy="606.2" r="1.6" fill="#983c92"/><circle cx="1155.6" cy="607.2" r="1.6" fill="#983c92"/><circle cx="1160.5" cy="608.4" r="1.6" fill="#983c92"/><circle cx="1165.3" cy="606.2" r="1.6" fill="#983c92"/><circle cx="1170.3" cy="606.2" r="1.6" fill="#983c92"/><circle cx="1175.2" cy="608.4" r="1.6" fill="#983c92"/><circle cx="1180.0" cy="606.2" r="1.6" fill="#983c92"/><circle cx="1185.0" cy="606.2" r="1.6" fill="#983c92"/><circle cx="1189.8" cy="618.1" r="1.6" fill="#983c92"/><circle cx="1194.7" cy="606.2" r="1.6" fill="#983c92"/><circle cx="1199.7" cy="606.2" r="1.6" fill="#983c92"/><circle cx="1204.5" cy="608.4" r="1.6" fill="#983c92"/><circle cx="1209.4" cy="606.2" r="1.6" fill="#983c92"/><circle cx="1214.4" cy="606.2" r="1.6" fill="#983c92"/><circle cx="1219.2" cy="607.2" r="1.6" fill="#983c92"/><circle cx="1223.4" cy="609.5" r="1.6" fill="#983c92"/></svg>
<div class="abs" style="left:72px;top:805.5px;width:1135px;height:11.5px;background:linear-gradient(#5ec0f6,#3db2f4 35%,#3aa8e8 60%,#34aaf2 100%);border-top:1px solid #5aa2d0;border-bottom:1px solid #4f9ed0"></div>
<div class="hdl" style="left:55px"><i></i><i></i><i></i></div>
<div class="hdl" style="left:1207px"><i></i><i></i><i></i></div>
<div class="li" style="left:356px;background:#b03cb0"></div>
<div class="abs" style="left:359.5px;top:827.2px;width:6px;height:6px;border-radius:50%;background:#fff;border:1.5px solid #b03cb0"></div>
<div class="leg" style="left:377.5px">FPS</div>
<div class="li" style="left:410px;background:#3cab5a"></div>
<div class="leg" style="left:431px">Smooth</div>
<div class="li" style="left:483px;background:#1f9ea0"></div>
<div class="leg" style="left:504px">1%Low(FPS)</div>
<div class="li" style="left:576px;background:#5458d0"></div>
<div class="leg" style="left:596px">SmallJank</div>
<div class="li" style="left:659px;background:#ef8a3c"></div>
<div class="abs" style="left:662.5px;top:827.2px;width:6px;height:6px;border-radius:50%;background:#fff;border:1.5px solid #ef8a3c"></div>
<div class="leg" style="left:678px">Jank</div>
<div class="li" style="left:716px;background:#d8403a"></div>
<div class="abs" style="left:719.5px;top:827.2px;width:6px;height:6px;border-radius:50%;background:#fff;border:1.5px solid #d8403a"></div>
<div class="leg" style="left:736px">BigJank</div>
<div class="li" style="left:788px;background:#3c8ee0"></div>
<div class="leg" style="left:808px">Stutter</div>
<div class="li" style="left:856px;background:#3fc2e4"></div>
<div class="leg" style="left:876px">InterFrame</div>
<div class="abs" style="left:1162px;top:824px;font-size:10px;color:#3b6fd9">全隐藏</div>
</body></html>
